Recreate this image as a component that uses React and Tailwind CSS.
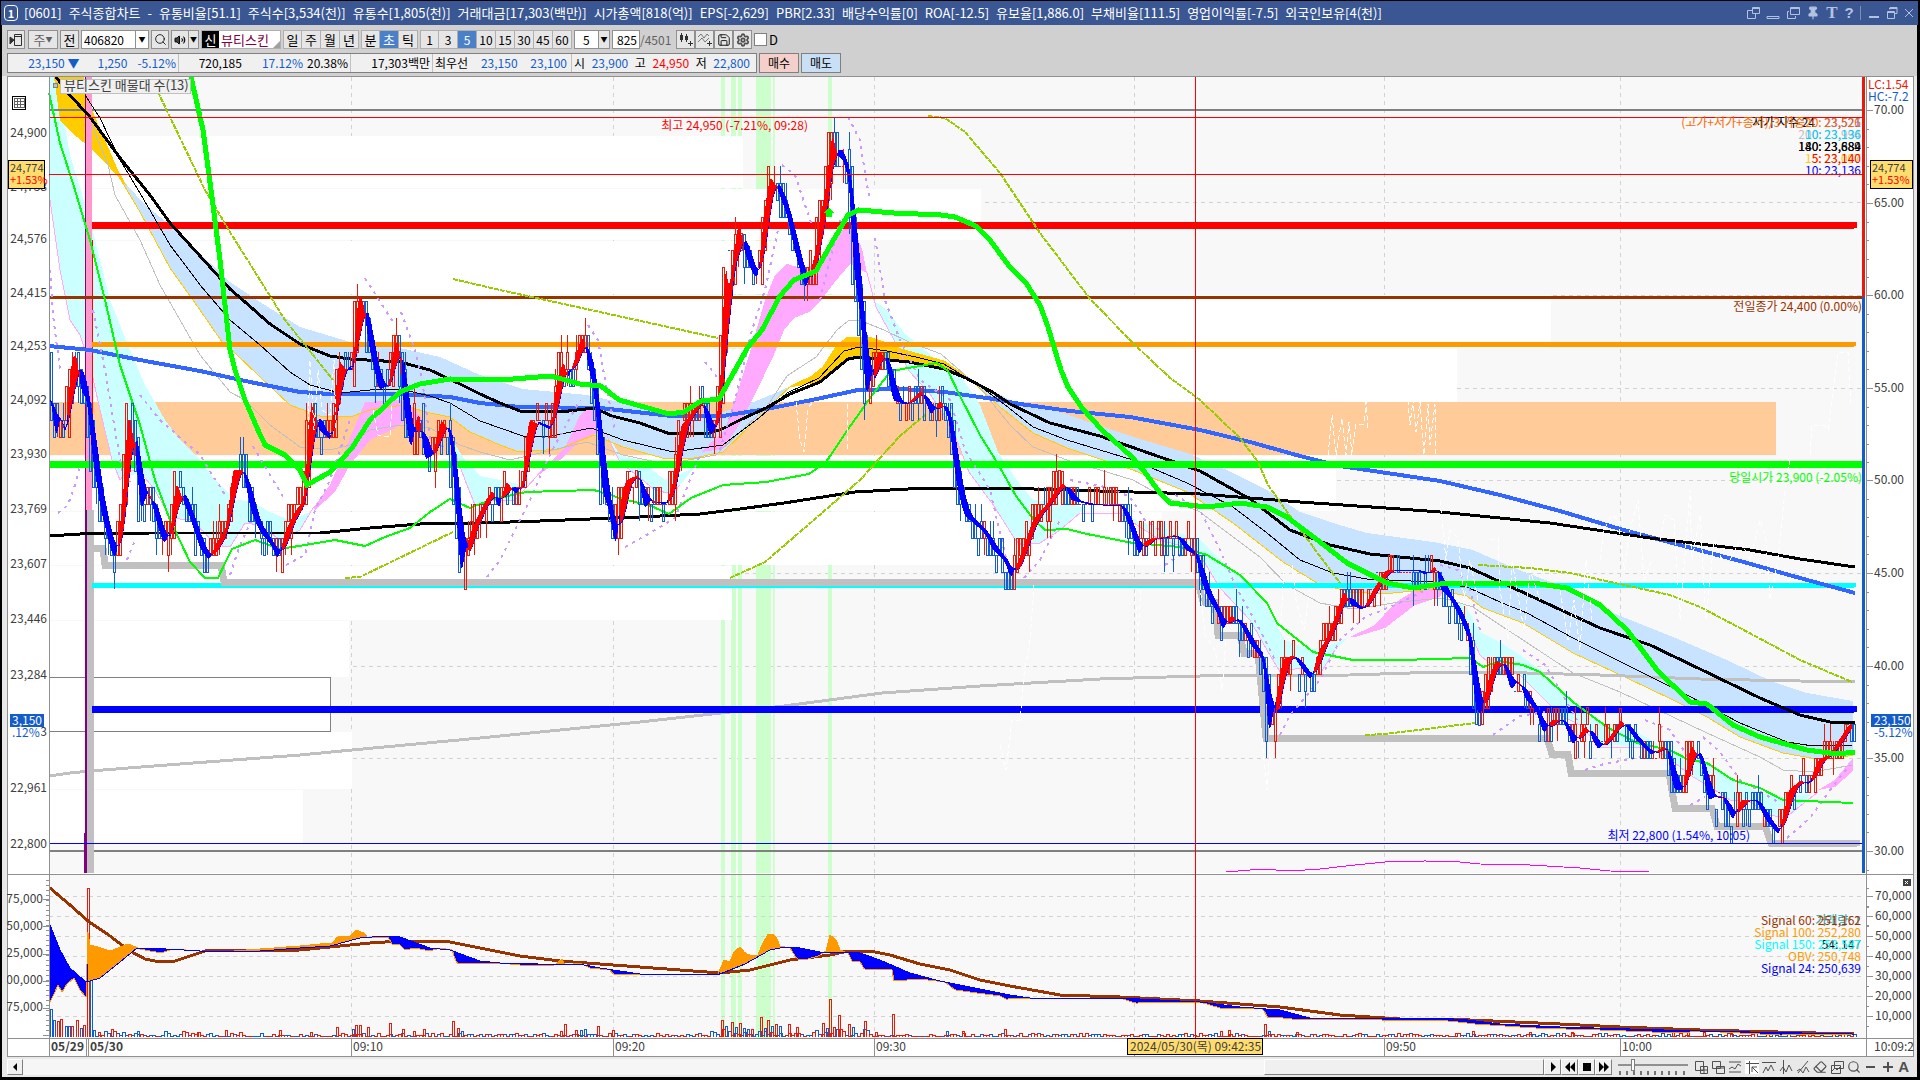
import { useState } from "react";
import { Search, Settings, Save, Volume2, Pin, Eraser } from "lucide-react";

const FONT = "font-['Liberation_Sans_Narrow','Noto_Sans_CJK_KR',sans-serif]";

// ---------- chart data (chart canvas coordinates) ----------
const PRICE = [50,400,55,440,60,415,65,440,70,365,75,350,80,390,86,400,92,460,100,510,110,550,115,560,122,500,127,410,133,440,140,510,148,490,155,520,163,545,170,530,175,480,182,500,190,520,200,550,208,560,217,540,225,530,232,470,242,470,250,510,258,530,270,545,277,560,285,530,295,510,303,500,310,400,318,430,330,440,338,360,345,370,352,370,357,295,362,300,368,345,378,390,388,385,393,345,398,340,403,410,410,450,418,410,424,460,432,455,440,420,448,430,453,480,460,575,467,540,475,520,485,500,492,490,498,510,505,480,515,495,523,480,527,420,540,425,550,430,556,380,563,360,567,380,572,365,578,345,583,335,588,370,592,385,597,430,601,490,608,510,615,550,620,500,625,480,638,475,643,510,650,500,665,505,673,480,680,425,690,415,700,395,708,435,715,430,721,360,724,260,728,290,733,255,738,220,743,250,750,270,757,280,763,215,769,175,777,190,786,215,796,260,805,290,815,250,820,215,826,180,831,130,836,155,842,160,848,180,853,270,860,320,865,400,872,370,878,350,885,360,892,400,905,405,920,390,930,415,940,400,948,420,955,480,963,515,975,525,985,535,992,550,1003,560,1010,578,1018,560,1025,540,1032,520,1045,505,1055,490,1063,482,1070,500,1090,505,1120,505,1130,530,1138,555,1145,540,1175,535,1185,550,1195,555,1200,580,1208,600,1215,610,1222,630,1230,615,1240,625,1250,645,1262,660,1268,735,1275,700,1282,660,1292,655,1302,670,1310,680,1318,650,1325,640,1335,615,1343,590,1350,605,1362,610,1372,590,1385,570,1400,570,1415,570,1425,575,1435,565,1440,590,1450,600,1460,620,1468,640,1475,710,1480,715,1487,680,1495,660,1503,665,1510,690,1518,680,1525,700,1535,710,1543,735,1550,720,1562,720,1572,745,1585,725,1597,750,1610,735,1620,720,1635,740,1650,755,1665,745,1673,790,1682,790,1690,745,1700,760,1707,800,1720,795,1732,820,1740,800,1755,800,1765,820,1778,835,1788,790,1800,780,1808,785,1817,760,1828,755,1838,740,1848,725,1853,723];

const LONG_GRAY = "49,776 70,773 90,771 180,764 300,755 352,750 480,738 640,722 784,706 882,693 980,686 1100,679 1200,676 1350,675 1440,672 1490,672 1600,675 1700,679 1800,681 1855,682";
const LONG_BLACK = "49,536 80,534 150,533 320,533 370,528 420,524 480,523 540,521 590,519 640,517 700,514 740,509 784,503 855,492 926,488 1000,488 1100,491 1200,494 1300,502 1400,509 1440,512 1500,518 1550,523 1650,538 1750,550 1800,559 1855,567";
const LONG_BLUE = "49,346 90,350 140,360 200,371 250,382 300,392 330,394 400,394 450,397 480,403 520,407 600,408 672,416 723,416 766,409 812,400 858,390 901,389 944,392 994,399 1020,404 1070,411 1130,417 1200,430 1250,442 1300,456 1340,466 1400,475 1440,481 1500,495 1560,511 1620,529 1680,545 1740,561 1800,578 1855,593";
const MID_BLACK = "56,77 68,93 90,117 120,158 150,195 170,223 200,256 230,289 245,302 270,324 300,344 330,356 350,359 400,362 430,370 460,384 480,394 500,403 520,411 560,412 594,408 612,416 640,423 670,434 710,433 722,429 740,420 766,408 790,394 820,382 848,359 859,357 909,362 944,369 966,378 994,393 1010,404 1050,423 1100,436 1160,457 1200,471 1250,499 1290,530 1330,545 1370,554 1440,561 1470,568 1520,591 1600,628 1650,645 1700,669 1760,698 1800,715 1830,722 1855,722";
const THIN_BLACK = "85,95 100,118 120,160 140,193 170,245 200,285 230,320 260,345 290,372 310,385 340,393 370,390 400,389 430,396 450,403 480,421 523,436 551,436 591,428 623,440 673,452 723,445 759,418 787,393 819,378 844,351 859,347 887,351 916,357 944,364 980,386 1009,408 1033,427 1067,440 1133,460 1187,483 1233,507 1267,533 1300,560 1333,573 1367,579 1433,582 1467,587 1500,602 1527,613 1573,638 1627,665 1687,695 1740,723 1787,742 1813,746 1853,745";
const THIN_SILVER = "92,125 108,165 115,195 140,240 160,285 180,320 200,355 230,392 245,400 270,425 300,447 330,450 350,445 370,430 400,425 430,428 460,445 480,452 510,460 587,442 623,455 666,464 716,455 744,428 766,408 787,376 816,357 837,330 848,321 859,320 884,330 909,342 941,354 980,388 1010,425 1033,447 1067,460 1133,480 1160,495 1200,512 1233,537 1260,557 1287,585 1320,603 1353,609 1400,602 1443,598 1473,607 1500,625 1523,640 1573,673 1620,692 1673,717 1707,733 1760,757 1783,770 1813,772 1853,765";
const YELLOW = "118,175 140,212 170,268 200,310 222,342 235,353 260,377 290,405 320,416 350,417 370,410 402,405 430,413 450,417 470,432 500,445 519,452 559,449 594,435 623,447 666,459 694,458 723,452 751,425 776,400 791,386 812,376 823,367 837,345 848,337 869,337 884,342 901,349 944,361 966,376 1000,407 1033,433 1067,448 1133,470 1187,492 1233,523 1283,562 1317,583 1350,592 1383,594 1433,589 1467,596 1483,608 1523,623 1573,653 1627,678 1673,700 1707,717 1740,737 1783,753 1817,759 1837,758 1853,755";
const THICK_GREEN = "191,77 203,130 213,205 220,260 225,305 230,350 235,370 245,400 258,430 265,445 285,455 300,470 307,485 330,472 352,448 370,420 400,392 420,384 450,379 500,380 551,376 580,384 601,386 619,400 648,408 669,414 684,412 701,401 719,399 730,379 748,347 762,330 780,296 794,280 816,271 830,246 848,215 859,210 894,213 941,215 955,217 976,226 990,240 1009,266 1026,283 1040,305 1048,327 1054,347 1061,370 1068,387 1082,408 1102,430 1133,458 1147,475 1160,493 1170,503 1207,507 1240,503 1267,507 1287,517 1320,542 1347,563 1387,583 1413,588 1447,583 1533,583 1567,588 1600,605 1627,630 1657,670 1690,702 1707,704 1733,725 1760,737 1807,750 1837,754 1855,752";
const THIN_GREEN = "49,93 60,143 75,190 90,240 105,300 120,365 140,425 155,480 170,520 190,562 205,578 218,578 225,563 232,549 255,540 280,549 305,545 335,540 365,546 385,537 410,528 430,512 450,499 470,508 490,500 526,492 594,490 623,499 651,506 669,514 691,498 723,485 766,482 809,474 826,462 851,425 873,394 891,371 937,363 948,371 959,394 980,435 998,464 1016,496 1034,520 1045,530 1067,529 1087,534 1133,543 1180,547 1207,555 1240,575 1267,603 1277,623 1313,652 1353,660 1400,660 1470,658 1483,667 1500,661 1523,665 1540,672 1573,702 1607,727 1637,743 1670,750 1687,759 1707,763 1733,780 1760,788 1783,800 1853,803";
const BLUE_BANDS = [
  "118,175 145,205 170,225 230,282 260,302 300,327 350,342 400,348 440,357 480,375 523,389 587,395 623,403 673,415 716,414 744,406 773,394 791,386 776,400 751,425 723,452 694,458 666,459 623,447 594,435 559,449 519,452 500,445 470,432 450,417 430,413 402,405 370,410 350,417 320,416 290,405 260,377 235,353 222,342 200,310 170,268 140,212",
  "966,376 1010,400 1050,409 1083,420 1133,437 1187,453 1227,470 1267,490 1300,512 1333,523 1367,533 1433,542 1473,550 1507,565 1540,578 1573,590 1613,613 1673,637 1727,660 1773,682 1807,693 1853,701 1853,755 1837,758 1817,759 1783,753 1740,737 1707,717 1673,700 1627,678 1573,653 1523,623 1483,608 1467,596 1433,589 1383,594 1350,592 1317,583 1283,562 1233,523 1187,492 1133,470 1067,448 1033,433 1000,407",
];
const GOLD = [
  "54,77 60,120 70,131 90,148 110,168 128,188 118,170 105,140 92,110 84,77",
  "787,388 812,376 823,367 837,345 848,337 869,337 884,342 901,349 944,361 966,376 944,369 909,362 859,357 848,359 820,382",
];
const CYAN_CLOUDS = [
  "50,77 56,77 70,155 90,220 110,300 130,350 145,385 165,420 180,440 200,460 215,480 235,500 250,501 270,512 290,520 310,512 300,530 280,540 260,525 245,523 230,547 215,545 205,533 190,520 170,518 155,490 140,472 120,480 112,460 100,410 90,365 80,335 70,320 60,270 50,200",
  "452,440 465,460 480,476 500,480 518,484 515,500 495,500 475,505 465,480",
  "605,430 620,455 640,460 665,480 694,468 680,485 672,494 655,490 640,478 620,462",
  "873,300 887,310 905,334 926,351 944,367 962,378 980,405 998,452 1016,479 1033,500 1067,503 1085,508 1060,530 1040,543 1022,545 1016,541 994,506 969,472 951,425 930,394 909,371 894,340",
  "1120,512 1140,522 1170,530 1200,540 1220,560 1245,580 1265,605 1285,640 1310,650 1330,645 1348,638 1335,650 1318,677 1300,668 1280,672 1267,650 1250,620 1220,588 1197,550 1160,540",
  "1455,600 1467,608 1480,632 1500,642 1520,655 1540,670 1560,690 1580,708 1600,721 1630,728 1660,745 1690,760 1710,765 1730,778 1760,793 1785,797 1812,793 1800,805 1785,818 1770,815 1750,802 1730,800 1715,790 1690,775 1665,755 1640,747 1615,745 1600,747 1580,725 1560,715 1540,695 1520,675 1495,668 1480,655",
];
const PINK_CLOUDS = [
  "313,508 330,485 345,450 365,402 400,400 410,405 425,422 425,428 410,418 395,428 370,440 350,465 335,492 315,510",
  "537,474 565,448 580,415 590,407 600,410 600,432 580,440 560,460 537,476",
  "701,452 725,430 735,400 750,352 765,300 775,275 787,264 805,269 816,263 833,239 851,222 862,249 867,273 859,269 850,264 834,283 819,303 809,312 794,318 784,330 773,357 755,394 741,422 723,449",
  "1350,637 1375,625 1395,603 1415,590 1445,587 1440,597 1415,605 1385,628 1355,637",
  "1818,790 1835,780 1853,758 1853,771 1835,787",
];
const PINK_LINES = ["50,200 60,270 70,320 80,335 90,365 100,410 112,460 120,480 128,470 140,472 155,490 170,518 190,520 205,533 215,545 230,547 245,523 260,525 280,540 300,530 313,508", "451,442 465,480 475,505 495,500 515,500 537,476", "605,432 620,462 640,478 655,490 672,494 680,485", "867,273 876,307 894,340 909,371 930,394 951,425 969,472 994,506 1016,541 1022,545 1040,543 1060,530 1080,513 1120,514 1160,540 1197,550 1220,588 1250,620 1267,650 1280,672 1300,668 1318,677 1335,650", "1455,600 1467,625 1480,655 1495,668 1520,675 1540,695 1560,715 1580,725 1600,747 1640,747 1665,755 1690,775 1715,790 1730,800 1750,802 1770,815 1785,818 1818,792"];
const OLIVE = ["158,92 205,190 230,232 285,320 333,380", "453,279 500,290 718,338", "345,578 360,577 453,532", "730,578 765,562 815,519 860,480 900,436 925,415", "928,116 945,118 965,132 1000,173 1040,233 1090,299 1135,345 1169,377 1200,400 1240,438 1258,462 1268,485 1290,516 1340,583", "1365,735 1385,734 1475,723", "1478,565 1530,568 1570,573 1615,583 1670,595 1700,607 1740,628 1800,660 1852,682"];
const VIOLET = ["50,270 53,315 60,370", "58,513 68,505 75,485 80,465", "93,310 105,370 115,430 122,470 130,482", "140,395 160,420 200,455 225,495", "127,560 135,540", "230,575 240,545 255,513", "253,446 270,475 285,500", "286,565 305,555 315,510 330,480 350,420", "365,278 395,325", "401,312 415,350 422,378 430,440 450,450", "487,577 500,560 515,530 530,500 545,465 555,445 580,400", "588,325 598,340 605,380 615,430", "625,547 650,533 675,518 690,480 700,455", "705,362 718,378", "720,450 735,400 752,330 765,290 778,230", "782,165 795,175 805,205 812,225", "820,300 840,220", "848,117 860,140 866,180 870,200", "875,238 885,300 900,340 920,380 950,400 965,450 990,490 1010,575", "1024,578 1040,560 1060,520", "1070,480 1110,488 1130,497 1145,520 1160,530", "1165,565 1180,555", "1175,495 1200,510 1220,550 1235,585 1260,630 1275,660", "1280,735 1290,715 1320,680 1340,640 1365,617 1395,605 1430,588", "1440,565 1458,570 1470,590 1480,630", "1493,735 1520,716 1545,712", "1523,650 1545,665 1560,690 1577,720", "1585,770 1600,765 1640,757", "1645,720 1670,730 1690,760", "1690,805 1705,797", "1703,737 1720,752 1740,780 1780,803", "1787,838 1810,818 1830,790 1850,765"];
const LOWS = "90,548 103,548 105,565 221,565 224,582 1198,582 1203,602 1215,602 1218,635 1240,635 1244,653 1258,653 1266,738 1547,738 1552,754 1568,754 1571,773 1669,773 1675,808 1712,808 1717,826 1765,826 1771,843 1857,843";
const SCRIBBLES = ["1328,455 1332,415 1336,455 1342,418 1346,455 1349,422 1352,455 1356,424 1364,424 1366,402 1368,430", "1408,400 1410,425 1413,400 1416,432 1420,402 1424,455 1428,404 1430,445 1435,404 1436,455", "796,402 800,440 804,452 808,408 813,402", "847,404 847,450", "308,430 310,360 314,430 318,370 322,410 330,415 334,360 336,430", "373,410 378,435 390,437 392,405", "1000,745 1006,770 1012,720 1020,720 1024,675 1030,640 1034,585", "1200,585 1205,635 1215,650 1218,665 1222,690 1226,640", "1135,590 1138,640 1141,590", "1262,740 1267,790 1270,745", "1280,640 1284,570 1292,565 1296,600 1304,630 1310,590", "1440,500 1446,560 1450,530 1458,538 1464,600 1470,560 1478,600", "1490,540 1498,538 1500,590 1508,640 1512,560 1524,630 1530,570 1540,600", "1560,590 1568,640 1574,600 1580,650 1586,560 1592,620", "1600,560 1604,530 1612,515 1618,520 1624,570 1630,530 1638,500 1644,580 1652,560", "1660,540 1665,515 1674,520 1680,620 1690,490 1692,560 1700,515 1706,620 1714,540 1722,560", "1730,560 1740,540 1750,560 1760,520 1766,540 1770,600 1778,560 1786,480 1790,460", "1810,455 1812,425 1824,425 1828,430 1838,352 1848,352 1851,405"];

const SIGNAL = [50,925,60,950,70,968,86,982,90,981,100,978,120,962,137,948,150,948,200,951,260,951,300,948,330,946,360,938,385,936,400,937,430,948,450,950,480,961,500,963,540,964,585,965,600,968,640,974,720,974,745,964,770,950,785,947,800,948,820,952,845,952,860,953,880,960,910,973,940,981,970,987,1010,995,1030,998,1060,998,1120,998,1200,1002,1240,1007,1280,1010,1310,1018,1460,1019,1500,1024,1560,1027,1700,1031,1854,1034];
const OBV = [50,1002,54,994,58,985,62,992,67,984,74,978,80,990,86,997,87,920,89,945,98,947,110,951,118,948,128,944,136,947,140,949,155,952,165,952,172,949,200,951,220,952,260,949,300,946,320,944,333,943,337,937,350,936,356,930,364,933,368,938,388,937,392,944,400,945,405,950,415,948,430,951,440,948,452,950,457,964,490,963,500,963,520,965,555,965,562,959,565,965,580,963,590,968,610,970,613,974,718,974,724,960,730,962,734,952,740,947,745,953,752,956,758,955,762,945,768,934,775,935,780,946,790,948,797,959,805,960,818,956,826,951,830,935,836,940,840,950,848,953,852,961,860,962,865,970,880,969,892,970,894,981,920,979,945,982,955,990,1000,996,1006,999,1050,998,1120,998,1135,1003,1200,1002,1220,1008,1263,1009,1268,1018,1275,1017,1300,1020,1320,1019,1450,1021,1475,1024,1535,1028,1600,1030,1680,1033,1700,1031,1780,1035,1854,1034];
const OBV_SLOW = "50,888 70,905 88,921 110,936 130,951 145,959 155,961 175,961 190,956 205,951 300,950 330,947 370,943 400,941 450,942 490,950 520,956 560,961 600,964 640,967 720,973 750,970 790,960 830,955 848,951 870,951 890,955 920,964 950,970 980,980 1010,986 1060,995 1120,997 1200,1001 1280,1007 1340,1015 1400,1019 1470,1020 1560,1024 1620,1027 1700,1030 1854,1034";
// x, top, 1 = up bar / 0 = down bar
const VOLUME = [[50,1009,0],[53,1020,0],[57,1021,1],[60,1019,1],[65,1026,0],[68,1026,0],[71,1026,1],[76,1020,1],[80,1028,0],[83,1025,1],[87,888,1],[90,977,0],[93,1030,0],[98,1032,1],[111,1029,1],[137,1031,0],[198,1032,1],[225,1030,1],[279,1030,1],[310,1032,1],[336,1027,1],[352,1029,0],[355,1025,1],[359,1025,1],[367,1027,1],[389,1023,1],[402,1029,1],[413,1031,1],[423,1029,1],[452,1021,1],[457,1028,1],[461,1031,0],[560,1031,1],[564,1024,1],[575,1030,1],[580,1030,0],[584,1029,0],[597,1026,1],[612,1030,1],[721,1020,1],[725,1026,0],[731,1022,1],[735,1027,0],[739,1023,1],[743,1028,0],[747,1029,0],[751,1029,1],[760,1017,1],[764,1028,0],[767,1020,1],[771,1026,0],[775,1024,1],[779,1026,0],[788,1024,1],[796,1027,1],[822,1023,1],[826,1028,0],[829,999,1],[833,1027,1],[838,1015,1],[848,1024,1],[852,1027,0],[864,1021,1],[875,1032,1],[892,1014,1],[946,1031,0],[962,1031,1],[1004,1029,1],[1220,1031,1],[1228,1030,1],[1264,1024,1],[1268,1031,0],[1296,1032,1],[1455,1033,1],[1472,1031,1],[1529,1032,1],[1571,1032,1],[1672,1032,1],[1687,1031,1],[1703,1032,1],[1730,1033,1]];

const ORDER_BANDS = [[135,188,743],[188,240,981],[240,294,860],[294,348,1551],[348,402,1457],[455,511,1336],[511,565,1162],[565,620,732],[620,677,349],[677,731,330],[731,789,352],[789,844,303]];
const GREEN_ZONES = [[721,4],[731,5],[738,4],[756,15],[773,2],[828,4]];
const TIMES = [[351,"09:10"],[613,"09:20"],[874,"09:30"],[1134,""],[1384,"09:50"],[1620,"10:00"]];
const LEFT_SCALE = [[132,"24,900"],[186,"24,738"],[238,"24,576"],[292,"24,415"],[345,"24,253"],[399,"24,092"],[453,"23,930"],[508,"23,769"],[563,"23,607"],[618,"23,446"],[674,"23,284"],[731,"23,123"],[787,"22,961"],[843,"22,800"]];
const LEVELS = [
  [225, "#ff0000", 7],
  [344, "#ff9900", 5],
  [585, "#00ffff", 5],
  [709, "#0000ff", 7],
];

// value of a flat [x, y, x, y ...] list at x
function at(pts, x) {
  for (let i = 2; i < pts.length; i += 2) {
    if (x <= pts[i]) {
      const t = (x - pts[i - 2]) / (pts[i] - pts[i - 2]);
      return pts[i - 1] + t * (pts[i + 1] - pts[i - 1]);
    }
  }
  return pts[pts.length - 1];
}

function noise(i) {
  const v = Math.sin(i * 12.9898) * 43758.5453;
  return v - Math.floor(v);
}

const TICK = 16.93;
const snap = (y) => Math.max(117, Math.min(843, Math.round(843 - Math.round((843 - y) / TICK) * TICK)));

function buildCandles() {
  let up = "";
  let down = "";
  for (let x = 50, i = 0; x < 1854; x += 3, i++) {
    const open = snap(at(PRICE, x - 4) + (noise(i) - 0.5) * 24);
    let close = snap(at(PRICE, x + 3) + (noise(i + 500) - 0.5) * 24);
    if (open === close && noise(i + 90) > 0.4) close += noise(i + 31) > 0.5 ? 17 : -17;
    close = Math.max(117, Math.min(843, close));
    const top = Math.min(open, close);
    const bottom = Math.max(open, close);
    let d = `M${x} ${top}H${x + 2}V${bottom}H${x}Z`;
    if (noise(i + 200) > 0.85) d += `M${x + 1} ${Math.max(117, top - 17)}V${top}`;
    if (noise(i + 300) > 0.85) d += `M${x + 1} ${bottom}V${Math.min(843, bottom + 17)}`;
    if (close < open) up += d;
    else if (close > open) down += d;
    else if (noise(i) > 0.5) up += d;
    else down += d;
  }
  return { up, down };
}

// area between two lines, split by which one is on top
function buildRibbon(a, b, from, to, step) {
  let over = "";
  let under = "";
  for (let x = from; x < to; x += step) {
    const y1 = a(x);
    const y2 = b(x);
    const d = `M${x} ${y1.toFixed(1)}L${x + step} ${a(x + step).toFixed(1)}V${b(x + step).toFixed(1)}L${x} ${y2.toFixed(1)}Z`;
    if (y1 < y2) over += d;
    else under += d;
  }
  return { over, under };
}

function average(x, n) {
  let sum = 0;
  for (let i = 0; i < n; i++) sum += at(PRICE, Math.max(50, x - i * 2));
  return sum / n;
}

function linePath(fn, from, to, step) {
  let d = "";
  for (let x = from; x <= to; x += step) d += `${d ? "L" : "M"}${x} ${fn(x).toFixed(1)}`;
  return d;
}

function buildVolume() {
  let up = "";
  let down = "";
  for (let x = 95, i = 0; x < 1854; x += 3, i++) {
    const h = Math.round(noise(i + 7) ** 2 * (x < 300 ? 5 : x > 700 && x < 870 ? 7 : 3));
    const d = `M${x} 1037V${1036 - h}H${x + 3}V1037`;
    if (noise(i + 60) > 0.5) up += d;
    else down += d;
  }
  VOLUME.forEach(([x, y, isUp]) => {
    const d = `M${x} 1037V${y}H${x + 2}V1037`;
    if (isUp) up += d;
    else down += d;
  });
  return { up, down };
}

const candles = buildCandles();
const fast = (x) => average(x, 2);
const slow = (x) => average(x, 7);
const ribbon = buildRibbon(fast, slow, 50, 1852, 2);
const obvRibbon = buildRibbon((x) => at(OBV, x), (x) => at(SIGNAL, x), 50, 1854, 2);
const volume = buildVolume();

function Lines({ items, ...rest }) {
  return items.map((points) => <polyline key={points} points={points} fill="none" {...rest} />);
}

function Areas({ items, fill }) {
  return items.map((points) => <polygon key={points} points={points} fill={fill} />);
}

function PricePanel() {
  return (
    <g>
      <rect x="49" y="77" width="1816" height="796" fill="#f8f8f8" />
      {TIMES.map(([x]) => (
        <path key={x} d={`M${x} 77V873`} stroke="#d3d3d3" strokeDasharray="4 4" />
      ))}
      {[202, 295, 388, 480, 573, 666, 758].map((y) => (
        <path key={y} d={`M49 ${y}H1864`} stroke="#d3d3d3" strokeDasharray="4 4" />
      ))}
      {GREEN_ZONES.map(([x, w]) => (
        <rect key={x} x={x} y="77" width={w} height="796" fill="#ccffcc" />
      ))}
      {ORDER_BANDS.map(([top, bottom, right]) => (
        <rect key={top} x="49" y={top + 1} width={right - 49} height={bottom - top - 1} fill="#fff" />
      ))}
      <rect x="756" y="135" width="15" height="53" fill="#ccffcc" />
      <rect x="49" y="677" width="281" height="54" fill="#fff" stroke="#808080" />
      <rect x="49" y="402" width="1727" height="53" fill="#ffcc99" />

      <Areas items={CYAN_CLOUDS} fill="#ccffff" />
      <Areas items={BLUE_BANDS} fill="#c7e3ff" />
      <Areas items={PINK_CLOUDS} fill="#ffaaff" />
      <Areas items={GOLD} fill="#ffcc00" />
      <Lines items={PINK_LINES} stroke="#ffaaff" />
      <polyline points={YELLOW} fill="none" stroke="#ffcc00" />
      <polyline points={THIN_SILVER} fill="none" stroke="#c0c0c0" />
      <polyline points={LONG_GRAY} fill="none" stroke="#c0c0c0" strokeWidth="3" />
      <path d="M49 110H1864M49 851H1864" stroke="#808080" strokeWidth="2" />

      <path d="M86 77V873" stroke="#800080" strokeWidth="2" />
      <path d="M85 833V873" stroke="#800080" strokeWidth="2" />
      <path d="M89 77V510" stroke="#ff99cc" strokeWidth="6" />
      <path d="M90 510V873" stroke="#c0c0c0" strokeWidth="7" />
      <path d="M92 240V460" stroke="#ff0000" />

      <path d="M49 297H1864" stroke="#993300" strokeWidth="3" />
      {LEVELS.map(([y, color, width]) => (
        <g key={y} stroke={color} strokeWidth={width}>
          <path d={`M92 ${y}H1853`} />
          <path d={`M1850 ${y}H1854`} strokeLinecap="round" />
        </g>
      ))}
      <polyline points={LOWS} fill="none" stroke="#c0c0c0" strokeWidth="7" strokeLinecap="round" />
      <path d="M1200 585H1853" stroke="#00ffff" strokeWidth="5" />
      <polyline points={LONG_BLUE} fill="none" stroke="#3366ff" strokeWidth="4" />
      <polyline points={LONG_BLACK} fill="none" stroke="#000" strokeWidth="3" />
      <polyline points={MID_BLACK} fill="none" stroke="#000" strokeWidth="3" />
      <polyline points={THIN_BLACK} fill="none" stroke="#000" />
      <path d="M49 464H1864" stroke="#00ff00" strokeWidth="7" />
      <Lines items={VIOLET} stroke="#cc99ff" strokeWidth="2" strokeDasharray="3 5" />
      <Lines items={OLIVE} stroke="#99cc00" strokeWidth="2" strokeDasharray="5 1" />
      <polyline points={THIN_GREEN} fill="none" stroke="#00ff00" strokeWidth="2" />

      <path d={candles.down} fill="none" stroke="#135cca" />
      <path d={candles.up} fill="none" stroke="#e81a0c" />
      <path d={linePath(slow, 50, 1852, 3)} fill="none" stroke="#0000ff" />
      <path d={ribbon.over} fill="#ff0000" />
      <path d={ribbon.under} fill="#0000ff" />
      <polyline points={THICK_GREEN} fill="none" stroke="#00ff00" strokeWidth="5" />
      <path d="M829 207l5 6h-2v4h-6v-4h-2z" fill="#00ff00" />
      <Lines items={SCRIBBLES} stroke="#fff" strokeDasharray="5 3" />
      <path d="M1226 872L1262 869L1290 871L1320 869L1355 865L1385 862L1425 861L1460 862L1480 864L1530 865L1580 868L1610 871L1649 872" fill="none" stroke="#ff00ff" />
      <path d="M49 117H1864" stroke="#ff0000" />
      <path d="M49 843H1864" stroke="#0000ff" />
    </g>
  );
}

function VolumePanel() {
  return (
    <g>
      <rect x="49" y="874" width="1816" height="164" fill="#f8f8f8" />
      {GREEN_ZONES.map(([x, w]) => (
        <rect key={x} x={x} y="875" width={w} height="163" fill="#ccffcc" />
      ))}
      {[896, 916, 936, 956, 976, 996, 1016].map((y) => (
        <path key={y} d={`M49 ${y}H1864`} stroke="#d3d3d3" strokeDasharray="4 4" />
      ))}
      {TIMES.map(([x]) => (
        <path key={x} d={`M${x} 875V1038`} stroke="#d3d3d3" strokeDasharray="4 4" />
      ))}
      <path d={volume.down} fill="none" stroke="#135cca" />
      <path d={volume.up} fill="none" stroke="#e81a0c" />
      <polyline points={OBV_SLOW} fill="none" stroke="#993300" strokeWidth="3" />
      <path d={obvRibbon.over} fill="#ff9900" />
      <path d={obvRibbon.under} fill="#0000ff" />
      <path d={linePath((x) => at(OBV, x), 50, 1854, 2)} fill="none" stroke="#ff9900" />
      <path d={linePath((x) => at(SIGNAL, x), 50, 1854, 2)} fill="none" stroke="#0000ff" />
    </g>
  );
}

function Scales() {
  const rightTicks = Array.from({ length: 9 }, (_, i) => [110 + Math.round(i * 92.6), `${70 - i * 5}.00`]);
  return (
    <g>
      <path d="M7.500 76.500H1913.500V1056H7.500Z" fill="none" stroke="#909090" />
      <path d="M49 76V1056M1866 76V1056M7 874H1914M7 1038H1914" fill="none" stroke="#909090" />
      <path d="M1863 77V297" stroke="#e81a0c" strokeWidth="3" />
      <path d="M1863 297V873" stroke="#135cca" strokeWidth="3" />
      <g fill="#404040" textAnchor="end">
        {LEFT_SCALE.map(([y, label]) => (
          <text key={y} x="47" y={y + 5}>{label}</text>
        ))}
        {["75,000", "50,000", "25,000", "00,000", "75,000"].map((label, i) => (
          <text key={i} x="43" y={903 + i * 27}>{label}</text>
        ))}
      </g>
      <path d="M43 899H49M43 926H49M43 954H49M43 981H49M43 1008H49M43 1035H49" stroke="#909090" />
      <path d="M47.500 880V1034" stroke="#909090" strokeWidth="3" strokeDasharray="1 4" />
      <g fill="#404040">
        {rightTicks.map(([y, label]) => (
          <g key={label}>
            <path d={`M1866 ${y}H1873M1866 ${y + 19}H1869M1866 ${y + 37}H1869M1866 ${y + 56}H1869M1866 ${y + 74}H1869`} stroke="#909090" />
            <text x="1874" y={y + 4}>{label}</text>
          </g>
        ))}
        {[70, 60, 50, 40, 30, 20, 10].map((v, i) => (
          <g key={v}>
            <path d={`M1866 ${896 + i * 20}H1873M1866 ${906 + i * 20}H1869`} stroke="#909090" />
            <text x="1875" y={900 + i * 20}>{v},000</text>
          </g>
        ))}
        {TIMES.map(([x, label]) => (
          <g key={x}>
            <path d={`M${x} 1038V1056`} stroke="#909090" />
            {label && <text x={x + 2} y="1051">{label}</text>}
          </g>
        ))}
        <path d="M86 1038V1056M88 1038V1056" stroke="#909090" />
        <text x="51" y="1051" className="font-bold">05/29</text>
        <text x="90" y="1051" className="font-bold">05/30</text>
        <text x="1874" y="1051">10:09:2</text>
      </g>
      <text x="1868" y="89" fill="#e81a0c">LC:1.54</text>
      <text x="1868" y="101" fill="#135cca">HC:-7.2</text>
    </g>
  );
}

function Legends() {
  return (
    <g textAnchor="end">
      <g>
        <text x="1815" y="127" fill="#000">저가 지수 24</text>
        <text x="1861" y="127" fill="#3366ff">23,521</text>
        <text x="1861" y="127" fill="#ff6600">(고가+저가+종가)/3 가중20: 23,526</text>
        <text x="1861" y="139" fill="#c0c0c0">200: 23,994</text>
        <text x="1861" y="139" fill="#00ccff">10: 23,136</text>
        <text x="1861" y="151" fill="#000">180: 23,884</text>
        <text x="1861" y="151" fill="#000">140: 23,689</text>
        <text x="1861" y="163" fill="#ffcc00">15: 23,097</text>
        <text x="1861" y="163" fill="#ff0000">5: 23,140</text>
        <text x="1861" y="175" fill="#0000ff">10: 23,136</text>
      </g>
      <text x="1862" y="311" fill="#993300">전일종가 24,400 (0.00%)</text>
      <text x="1862" y="482" fill="#00ff00">당일시가 23,900 (-2.05%)</text>
      <text x="1750" y="840" fill="#0000ff">최저 22,800 (1.54%, 10:05)</text>
      <text x="808" y="130" fill="#ff0000">최고 24,950 (-7.21%, 09:28)</text>
      <text x="1861" y="925" fill="#339999">거래량: 1</text>
      <text x="1861" y="925" fill="#993300">Signal 60: 251,162</text>
      <text x="1861" y="937" fill="#ff9900">Signal 100: 252,280</text>
      <text x="1861" y="949" fill="#000">54: 147</text>
      <text x="1861" y="949" fill="#00ffff">Signal 150: 253,587</text>
      <text x="1861" y="961" fill="#ff9900">OBV: 250,748</text>
      <text x="1861" y="973" fill="#0000ff">Signal 24: 250,639</text>
    </g>
  );
}

function Cursor() {
  return (
    <g>
      <path d="M49 174.500H1864M1195.500 77V1038" stroke="#ff0000" fill="none" />
      {[[8, 36], [1870, 42]].map(([x, w]) => (
        <g key={x}>
          <rect x={x + 0.5} y="160.500" width={w} height="28" fill="#ffdc6e" stroke="#000" />
          <text x={x + 2} y="172" fill="#404040" className="text-[11px]">24,774</text>
          <text x={x + 2} y="184" fill="#ff0000" className="text-[11px]">+1.53%</text>
        </g>
      ))}
      <rect x="9" y="727" width="32" height="12" fill="#fff" />
      <rect x="10" y="714" width="34" height="13" fill="#135cca" />
      <text x="12" y="725" fill="#fff">3,150</text>
      <text x="12" y="737" fill="#135cca">.12%</text>
      <rect x="1871" y="714" width="40" height="13" fill="#135cca" />
      <text x="1874" y="725" fill="#fff">23,150</text>
      <text x="1874" y="737" fill="#135cca">-5.12%</text>
      <rect x="1127.500" y="1038.500" width="135" height="16" fill="#ffdc6e" stroke="#000" />
      <text x="1130" y="1051" fill="#404040">2024/05/30(목) 09:42:35</text>
      <rect x="60" y="79" width="130" height="14" fill="#f0f0f0" stroke="#c0c0c0" />
      <text x="64" y="90" fill="#404040" className="text-[13px]">뷰티스킨 매물대 수(13)</text>
      <rect x="53" y="83" width="4" height="4" fill="#c0c0c0" stroke="#808080" />
      <path d="M12.500 96.500H25.500V109.500H12.500Z" fill="#fff" stroke="#000" />
      <path d="M14 98.500H24V107.500H14ZM14 101.500H24M14 104.500H24M17.500 98V107M20.500 98V107" fill="none" stroke="#606060" />
      <rect x="1903" y="879" width="8" height="7" fill="#404040" />
      <path d="M1905 881l3 3m0-3l-3 3" stroke="#fff" />
    </g>
  );
}

function Chart() {
  return (
    <svg
      role="img"
      aria-label="뷰티스킨 5초 차트"
      viewBox="7 76 1907 981"
      preserveAspectRatio="none"
      className={`block h-full w-full bg-white text-[12px] ${FONT}`}
      shapeRendering="crispEdges"
    >
      <rect x="7" y="76" width="1907" height="981" fill="#fff" />
      <PricePanel />
      <VolumePanel />
      <Scales />
      <Legends />
      <Cursor />
    </svg>
  );
}

const STATS = ["[0601]", "주식종합차트", "-", "유통비율[51.1]", "주식수[3,534(천)]", "유통수[1,805(천)]", "거래대금[17,303(백만)]", "시가총액[818(억)]", "EPS[-2,629]", "PBR[2.33]", "배당수익률[0]", "ROA[-12.5]", "유보율[1,886.0]", "부채비율[111.5]", "영업이익률[-7.5]", "외국인보유[4(천)]"];

function TitleBar() {
  return (
    <header className="flex h-6 shrink-0 items-center bg-[#3a5793] px-[3px] text-white">
      <span className="mr-1.5 flex h-4 w-3.5 items-center justify-center rounded-sm border border-white text-[11px] font-bold">1</span>
      <h1 className="flex grow gap-[7px] overflow-hidden text-[13px] whitespace-nowrap">
        {STATS.map((s) => <span key={s}>{s}</span>)}
      </h1>
      <div className="flex items-center gap-1.5 text-[#b3c2e0]">
        <button aria-label="분리"><svg width="14" height="14" fill="none" stroke="currentColor"><path d="M6.500 1.500h7v6h-7zM6 4.500H1.500v8h8V8M6 2.500h8" /></svg></button>
        <button aria-label="접기"><svg width="14" height="14" fill="none" stroke="currentColor"><path d="M1 10.500h12v2H1z" /></svg></button>
        <button aria-label="복제"><svg width="14" height="14" fill="none" stroke="currentColor"><path d="M4.500 1.500h9v7h-9zM4 2.500h10M3 5.500H1.500v7h8V10" /></svg></button>
        <button aria-label="고정"><Pin size={14} fill="currentColor" /></button>
        <button className="w-3 font-['Liberation_Serif',serif] text-[17px] leading-4 font-bold">T</button>
        <button className="w-2.5 font-['Liberation_Sans',sans-serif] text-[15px] leading-4 font-bold">?</button>
      </div>
      <span className="mx-1.5 h-3.5 w-px bg-[#8090b0]" />
      <div className="flex items-center gap-1 text-[#b3c2e0]">
        <button aria-label="최소화"><svg width="14" height="14" stroke="currentColor" strokeWidth="2"><path d="M2 11h10" /></svg></button>
        <button aria-label="이전 크기"><svg width="14" height="14" fill="none" stroke="currentColor"><path d="M5 3.500V1.500h7v6h-2M4 2.500h8M2.500 5.500h7v7h-7zM2 6.500h8" /></svg></button>
        <button aria-label="닫기"><svg width="12" height="14" stroke="currentColor"><path d="M2 3l8 8M10 3l-8 8" /></svg></button>
      </div>
    </header>
  );
}

const BOX = "flex h-[19px] items-center justify-center border border-[#909090] bg-[#e6e6e6]";

function Toggle({ label, active, onClick }) {
  return (
    <button
      onClick={onClick}
      className={`flex h-[19px] w-[19px] items-center justify-center border border-l-0 border-[#b0b0b0] first:border-l ${active ? "bg-[#4a80c8] text-white" : "bg-[#e6e6e6]"}`}
    >
      {label}
    </button>
  );
}

function Toolbar() {
  const [unit, setUnit] = useState("초");
  const [count, setCount] = useState("5");
  return (
    <div className="flex h-[27px] shrink-0 items-center gap-0.5 pt-0.5 pl-[5px] text-[13px]">
      <button aria-label="목록" className={`${BOX} mr-px w-[18px]`}>
        <svg width="14" height="14" fill="none" stroke="#303030"><path d="M5.500 1.500h7v11h-7zM5 3.500h8" /><path d="M1 4l4 3-4 4z" fill="#303030" /></svg>
      </button>
      <button className={`${BOX} w-[30px] justify-around text-[#606060]`}>주 <span className="text-[7px]">▼</span></button>
      <button className={`${BOX} w-[19px]`}>전</button>
      <div className="flex">
        <input aria-label="종목코드" defaultValue="406820" className="h-[19px] w-[55px] border border-[#909090] bg-white pl-0.5 text-[12px]" />
        <button aria-label="종목 목록" className={`${BOX} w-[13px] border-l-0 bg-white text-[7px]`}>▼</button>
      </div>
      <button aria-label="검색" className={`${BOX} w-[18px]`}><Search size={13} strokeWidth={1.5} /></button>
      <div className="flex">
        <button aria-label="소리" className={`${BOX} w-[18px]`}><Volume2 size={12} fill="#404040" /></button>
        <button aria-label="소리 설정" className={`${BOX} w-[10px] border-l-0 text-[7px]`}>▼</button>
      </div>
      <div className="flex h-[19px] w-20 items-center border border-[#b0b0b0] bg-white">
        <span className="mr-0.5 flex h-full w-[17px] items-center justify-center bg-black text-white">신</span>
        <span className="grow text-[#800040]">뷰티스킨</span>
        <svg width="7" height="7" className="self-end" fill="#a0a0a0"><path d="M7 0v7H0z" /></svg>
      </div>
      <div className="flex">
        {["일", "주", "월", "년"].map((t) => <Toggle key={t} label={t} active={unit === t} onClick={() => setUnit(t)} />)}
      </div>
      <div className="flex">
        {["분", "초", "틱"].map((t) => <Toggle key={t} label={t} active={unit === t} onClick={() => setUnit(t)} />)}
      </div>
      <div className="flex text-[12px]">
        {["1", "3", "5", "10", "15", "30", "45", "60"].map((t) => <Toggle key={t} label={t} active={count === t} onClick={() => setCount(t)} />)}
      </div>
      <div className="relative flex text-[12px]">
        <select aria-label="주기" defaultValue="5" className="h-[19px] w-9 appearance-none border border-[#909090] bg-white pl-2">
          <option>5</option>
          <option>10</option>
        </select>
        <span className="pointer-events-none absolute right-0 flex h-[19px] w-3 items-center justify-center border border-[#909090] bg-[#e6e6e6] text-[7px]">▼</span>
      </div>
      <label className="flex w-[62px] items-center text-[12px] text-[#606060]">
        <input aria-label="조회 개수" defaultValue="825" className="h-[19px] w-[28px] border border-[#909090] bg-white pr-0.5 text-right text-black" />/4501
      </label>
      <div className="flex">
        <button aria-label="종목 추가" className={`${BOX} w-[19px]`}>
          <svg width="15" height="15" fill="#303030" stroke="#303030"><path d="M3.500 1v9M8.500 2v8M12.500 9v5M10 11.500h5" /><path d="M2 3h3v5H2zM7 4h3v4H7z" stroke="none" /></svg>
        </button>
        <button aria-label="지표 추가" className={`${BOX} w-[19px]`}>
          <svg width="15" height="15" fill="none" stroke="#303030"><path d="M1 5l3-3 3 4 3-4 2 2M1 10l4-4 3 4 4-4" strokeOpacity="0.6" /><path d="M12.500 9v5M10 11.500h5" /></svg>
        </button>
        <button aria-label="저장" className={`${BOX} w-[19px]`}><Save size={14} strokeWidth={1.5} /></button>
        <button aria-label="설정" className={`${BOX} w-[19px] text-[#505050]`}><Settings size={14} strokeWidth={3} /></button>
      </div>
      <label className="flex items-center gap-0.5">
        <input type="checkbox" className="h-[13px] w-[13px] appearance-none border border-[#808080] bg-white" />D
      </label>
    </div>
  );
}

function QuoteBar() {
  return (
    <div className="flex h-6 shrink-0 items-start gap-0.5 pt-px pl-[5px] text-[12px] whitespace-nowrap">
      <div className="flex h-5 w-[750px] items-center border border-[#808080] bg-[#f0f0f0] text-black">
        <div className="flex h-full w-[171px] items-center justify-end gap-2.5 border-r border-[#c0c0c0] pr-0.5 text-[#135cca]">
          <span>23,150 ▼</span>
          <span className="pl-2">1,250</span>
          <span>-5.12%</span>
        </div>
        <div className="flex h-full w-[172px] items-center justify-end gap-1 border-r border-[#c0c0c0] pr-0.5">
          <span className="pr-3">720,185</span>
          <span className="pl-1 text-[#135cca]">17.12%</span>
          <span>20.38%</span>
        </div>
        <div className="flex h-full w-[82px] items-center justify-end border-r border-[#c0c0c0] pr-0.5">17,303백만</div>
        <div className="flex h-full w-[139px] items-center justify-between border-r border-[#c0c0c0] pr-1 pl-0.5">
          최우선
          <span className="text-[#135cca]">23,150</span>
          <span className="text-[#135cca]">23,100</span>
        </div>
        <div className="flex grow items-center justify-between pr-1.5 pl-0.5">
          시 <span className="text-[#135cca]">23,900</span>
          고 <span className="text-[#ff0000]">24,950</span>
          저 <span className="text-[#135cca]">22,800</span>
        </div>
      </div>
      <button className="h-5 w-10 border border-[#808080] bg-[#f5d0cb]">매수</button>
      <button className="h-5 w-10 border border-[#808080] bg-[#c8dff5]">매도</button>
    </div>
  );
}

const PLAY = [["재생", "M5 2l5 5-5 5z"], ["뒤로", "M7 2v10L2 7zM12 2v10L7 7z"], ["정지", "M3 3h8v8H3z"], ["앞으로", "M2 2v10l5-5zM7 2v10l5-5z"]];
const TOOLS = [
  ["확대 창", "M1.500 1.500h8v9h-8zM6.500 6.500h7v7h-7zM10 6v8M6 10h8"],
  ["겹친 창", "M1.500 1.500h8v7h-8zM5.500 6.500h8v7h-8zM6 8h8"],
  ["지표", "M1 2h12M1 12h12M1 9l3-2 3 2 3-5 3 2"],
  ["기준선", "M1 3.500h13M4.500 1v13M13 13L7 7M7 12V7h5"],
  ["고점", "M0 2.500h14M1 13l3-6 2 4 3-6 3 6"],
  ["수직선", "M4.500 0v14M1 11l3-4 3 5 3-7 3 6"],
  ["추세선", "M2 13L12 1M1 11l3-2 3 4 3-6 3 5"],
];

function BottomBar() {
  return (
    <footer className="flex h-5 shrink-0 items-center bg-[#e8e8e8] pr-2 pl-[5px] text-[#505050]">
      <button aria-label="왼쪽" className="flex h-4 w-4 items-center justify-center border border-t-white border-r-[#808080] border-b-[#808080] border-l-white bg-[#f0f0f0]">
        <svg width="8" height="10"><path d="M6 1v8L2 5z" fill="#000" /></svg>
      </button>
      <div className="flex h-4 grow bg-[#f6f6f6]">
        <div className="grow" />
        <div className="w-[280px] border border-t-white border-r-[#808080] border-b-[#808080] border-l-white bg-[#f0f0f0]" />
      </div>
      {PLAY.map(([label, d]) => (
        <button key={label} aria-label={label} className="flex h-4 w-[17px] items-center justify-center border border-t-white border-r-[#808080] border-b-[#808080] border-l-white bg-[#f0f0f0]">
          <svg width="14" height="14"><path d={d} fill="#000" /></svg>
        </button>
      ))}
      <label className="mx-1.5 flex w-[70px] flex-col">
        <input type="range" aria-label="속도" defaultValue="20" className="h-3 w-full appearance-none bg-[linear-gradient(#909090,#909090)] bg-[length:100%_2px] bg-center bg-no-repeat [&::-webkit-slider-thumb]:h-3 [&::-webkit-slider-thumb]:w-1 [&::-webkit-slider-thumb]:appearance-none [&::-webkit-slider-thumb]:border [&::-webkit-slider-thumb]:border-[#808080] [&::-webkit-slider-thumb]:bg-white" />
        <svg viewBox="0 0 70 4" className="h-1 w-full"><path d="M2 0v4M9 0v4M16 0v4M23 0v4M30 0v4M37 0v4M44 0v4M51 0v4M58 0v4M66 0v4" stroke="#000" /></svg>
      </label>
      <div className="flex items-center gap-[3px]">
        {TOOLS.map(([label, d]) => (
          <button key={label} aria-label={label} className={label === "기준선" ? "bg-white" : ""}>
            <svg width="14" height="14" fill="none" stroke="#505050"><path d={d} /></svg>
          </button>
        ))}
        <button aria-label="지우기"><Eraser size={14} /></button>
        <button aria-label="차트 창">
          <svg width="14" height="14" fill="none" stroke="#505050"><path d="M4.500 1.500h9v7h-9zM1.500 5.500h9v8h-9zM2 11l3-3 2 2 3-3" /></svg>
        </button>
        <button aria-label="돋보기"><Search size={14} /></button>
        <button aria-label="축소"><svg width="14" height="14" stroke="#505050" strokeWidth="2"><path d="M2 7h9" /></svg></button>
        <button aria-label="확대"><svg width="14" height="14" stroke="#505050" strokeWidth="2"><path d="M2 7h10M7 2v10" /></svg></button>
        <button className="font-['Liberation_Sans',sans-serif] text-[15px] leading-4 font-bold">A</button>
      </div>
    </footer>
  );
}

export default function App() {
  return (
    <div className={`h-screen bg-black pt-px pr-0.5 pb-[3px] pl-px ${FONT}`}>
      <main className="flex h-full flex-col">
        <TitleBar />
        <div className="mx-px flex min-h-0 grow flex-col bg-[#d0d0d0]">
          <Toolbar />
          <QuoteBar />
          <div className="min-h-0 grow bg-[#e8e8e8] pr-[3px] pl-[5px]">
            <Chart />
          </div>
          <BottomBar />
        </div>
      </main>
    </div>
  );
}
